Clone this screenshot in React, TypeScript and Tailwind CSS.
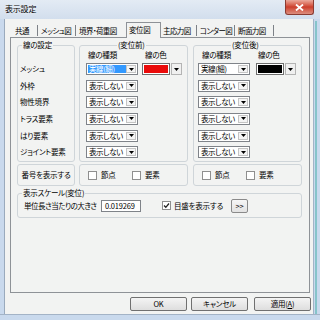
const FONT = "font-['Noto_Sans_CJK_JP',sans-serif] [font-feature-settings:'palt']";

function Tri() {
  return (
    <svg width="5" height="3" viewBox="0 0 5 3">
      <path d="M0 0h5L2.5 3z" fill="#000" />
    </svg>
  );
}

function TypeSelect({ text, hl }: { text: string; hl?: boolean }) {
  return (
    <div className="flex h-[12px] w-[52px] shrink-0 border border-[#7f8389] bg-white">
      <div
        className={
          hl
            ? "my-px ml-px flex flex-1 items-center bg-[#3399ff] pl-px leading-[8px] tracking-[-0.4px] text-white"
            : "my-px ml-px flex flex-1 items-center pl-px leading-[8px] tracking-[-0.4px]"
        }
      >
        {text}
      </div>
      <div className="my-px mr-px flex w-[10px] shrink-0 items-center justify-center border border-[#c4c4c4] bg-[#f4f4f4]">
        <Tri />
      </div>
    </div>
  );
}

function ColorSelect({ color, ml }: { color: string; ml: string }) {
  return (
    <div className={`flex items-center ${ml}`}>
      <div className="h-[12px] w-[28px] border border-[#6e6e6e] bg-white p-px">
        <div className="h-full w-full" style={{ background: color }} />
      </div>
      <div className="ml-px flex h-[12px] w-[11px] items-center justify-center border border-[#b4b4b4] bg-[#f0f0f0]">
        <Tri />
      </div>
    </div>
  );
}

function Check({ checked }: { checked?: boolean }) {
  return (
    <div className="flex h-[9px] w-[9px] shrink-0 items-center justify-center border border-[#8f8f8f] bg-white">
      {checked && (
        <svg width="7" height="7" viewBox="0 0 7 7">
          <path d="M1 3.5l1.8 1.8L6 1.5" stroke="#222" strokeWidth="1.3" fill="none" />
        </svg>
      )}
    </div>
  );
}

function Legend({ text, left }: { text: string; left: string }) {
  return (
    <span className={`absolute top-[-6px] ${left} bg-[#f2f3f2] px-px leading-[10px]`}>{text}</span>
  );
}

const rows = ["メッシュ", "外枠", "物性境界", "トラス要素", "はり要素", "ジョイント要素"];

function LineGroup({
  title,
  w,
  ml,
  pl,
  headW,
  color,
  first,
  colorMl,
  hl,
}: {
  title: string;
  w: string;
  ml: string;
  pl: string;
  headW: string;
  color: string;
  first: string;
  colorMl: string;
  hl?: boolean;
}) {
  return (
    <div className={`relative ${w} ${ml} rounded-[3px] border border-[#cfd5d9] pt-[3px]`}>
      <Legend text={title} left="left-[37px]" />
      <div className="flex h-[12px] items-center pl-[8px]">
        <span className={headW}>線の種類</span>
        <span>線の色</span>
      </div>
      <div className={`mt-[2px] flex flex-col gap-[4.67px] ${pl}`}>
        {rows.map((r, i) => (
          <div key={r} className="flex h-[12px] items-center">
            <TypeSelect text={i === 0 ? first : "表示しない"} hl={i === 0 && hl} />
            {i === 0 && <ColorSelect color={color} ml={colorMl} />}
          </div>
        ))}
      </div>
    </div>
  );
}

function CheckPair({ w, ml }: { w: string; ml: string }) {
  return (
    <div className={`relative flex h-full ${w} ${ml} items-center rounded-[3px] border border-[#cfd5d9] pl-[8px]`}>
      <div className="flex w-[44px] items-center gap-[4px]">
        <Check />
        <span>節点</span>
      </div>
      <div className="flex items-center gap-[4px]">
        <Check />
        <span>要素</span>
      </div>
    </div>
  );
}

function Tab({ label, w, pl, sep = true }: { label: string; w: string; pl: string; sep?: boolean }) {
  return (
    <div
      className={`mt-[6px] flex h-[11px] ${w} ${pl} shrink-0 items-center tracking-[-0.6px] ${
        sep ? "border-r border-[#7d8187]" : ""
      }`}
    >
      {label}
    </div>
  );
}

function Btn({ children, ml }: { children: React.ReactNode; ml: string }) {
  return (
    <div
      className={`${ml} flex h-[14px] w-[57px] items-center justify-center rounded-[2px] border border-[#707070] bg-gradient-to-b from-[#f4f4f4] to-[#dedede]`}
    >
      {children}
    </div>
  );
}

export default function App() {
  return (
    <div
      className={`${FONT} h-[320px] w-[320px] overflow-hidden whitespace-nowrap bg-[#c9d9ed] text-[7.5px] leading-[10px] tracking-[-0.2px] text-black`}
    >
      {/* title bar */}
      <div className="flex h-[19px] bg-gradient-to-b from-[#e3ebf4] to-[#d2deed]">
        <span className="ml-[5px] mt-[4px] text-[8px] [text-shadow:0_0_3px_#fff]">表示設定</span>
        <div className="ml-auto mr-[6px] flex h-[15px] w-[29px] items-center justify-center rounded-b-[3px] border border-t-0 border-[#8b3b31] bg-gradient-to-b from-[#eaa99c] via-[#cc3d2b] to-[#dc8d7e]">
          <svg width="9" height="7" viewBox="0 0 9 7">
            <path d="M1 0.5l7 6M8 0.5l-7 6" stroke="#fff" strokeWidth="1.8" />
          </svg>
        </div>
      </div>

      <div className="flex h-[295px]">
        <div className="ml-[4px] w-px bg-[#9aaabd]" />
        {/* client */}
        <div className="flex w-[308px] flex-col bg-[#f2f3f2]">
          {/* tabs */}
          <div className="flex h-[18px] pl-[5px]">
            <Tab label="共通" w="w-[28px]" pl="pl-[5px]" />
            <Tab label="メッシュ図" w="w-[38px]" pl="pl-[3px]" />
            <Tab label="境界・荷重図" w="w-[50px]" pl="pl-[3px]" sep={false} />
            <div className="relative z-10 mt-[3px] flex h-[16px] w-[35px] shrink-0 items-start border border-b-0 border-[#8e9297] bg-[#f2f3f2] pl-[2px] pt-[2px] tracking-[-0.4px]">
              変位図
            </div>
            <Tab label="主応力図" w="w-[36px]" pl="pl-[2px]" />
            <Tab label="コンター図" w="w-[38px]" pl="pl-[3px]" />
            <Tab label="断面力図" w="w-[39px]" pl="pl-[3px]" />
          </div>

          {/* panel */}
          <div className="ml-[5px] flex h-[256px] w-[300px] flex-col border border-[#8e9297] bg-[#f2f3f2] pl-[6px] pt-[7px]">
            <div className="flex h-[117px]">
              <div className="relative w-[58px] rounded-[3px] border border-[#cfd5d9] pl-[2px] pt-[17px]">
                <Legend text="線の設定" left="left-[4px]" />
                <div className="flex flex-col gap-[4.67px]">
                  {rows.map((r) => (
                    <div key={r} className="flex h-[12px] items-center">
                      {r}
                    </div>
                  ))}
                </div>
              </div>
              <LineGroup
                title="(変位前)"
                w="w-[109px]"
                ml="ml-[4px]"
                pl="pl-[6px]"
                headW="w-[57px]"
                color="#ea0a0a"
                first="実線(細)"
                colorMl="ml-[4px]"
                hl
              />
              <LineGroup
                title="(変位後)"
                w="w-[109px]"
                ml="ml-[5px]"
                pl="pl-[4px]"
                headW="w-[56px]"
                color="#000"
                first="実線(細)"
                colorMl="ml-[6px]"
              />
            </div>

            <div className="mt-[2px] flex h-[22px]">
              <div className="flex h-full w-[58px] items-center justify-center rounded-[3px] border border-[#cfd5d9]">
                番号を表示する
              </div>
              <CheckPair w="w-[109px]" ml="ml-[4px]" />
              <CheckPair w="w-[109px]" ml="ml-[5px]" />
            </div>

            <div className="relative mt-[7px] flex h-[25px] w-[285px] items-center rounded-[3px] border border-[#cfd5d9] pl-[6px]">
              <Legend text="表示スケール(変位)" left="left-[4px]" />
              <span className="w-[77px] shrink-0 tracking-[-0.5px]">単位長さ当たりの大きさ</span>
              <div className="flex h-[12px] w-[40px] shrink-0 items-center border border-[#7f8389] bg-white pl-[3px] leading-[10px]">
                0.019269
              </div>
              <div className="ml-[21px] flex w-[69px] shrink-0 items-center gap-[3px]">
                <Check checked />
                <span>目盛を表示する</span>
              </div>
              <div className="flex h-[14px] w-[17px] items-center justify-center rounded-[2px] border border-[#8a8a8a] bg-gradient-to-b from-[#f6f6f6] to-[#e2e2e2]">
                &gt;&gt;
              </div>
            </div>
          </div>

          {/* buttons */}
          <div className="mt-[4px] flex">
            <Btn ml="ml-[125px]">OK</Btn>
            <Btn ml="ml-[4px]">キャンセル</Btn>
            <Btn ml="ml-[6px]">
              <span>
                適用(<span className="underline">A</span>)
              </span>
            </Btn>
          </div>
        </div>
        {/* right frame */}
        <div className="flex w-[7px]">
          <div className="w-px bg-[#a3b3c6]" />
          <div className="ml-px mt-[2px] w-[2px] bg-[#86c4ca]" />
        </div>
      </div>
      <div className="h-[6px] border-t border-[#a3b3c6] bg-[#c9d9ed]" />
    </div>
  );
}
